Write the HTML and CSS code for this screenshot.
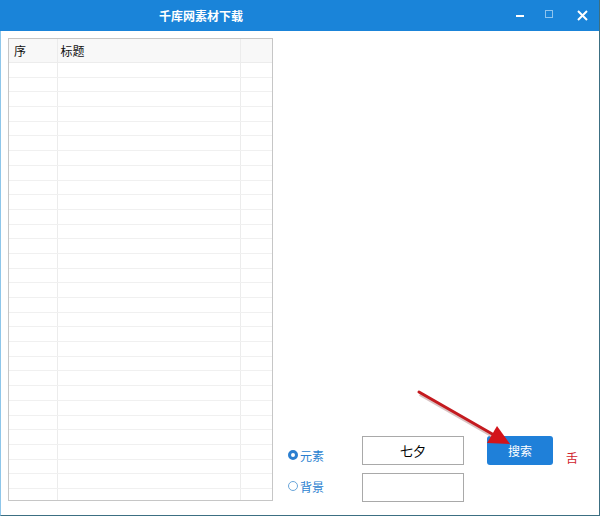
FILE: index.html
```html
<!DOCTYPE html>
<html lang="zh">
<head>
    <meta charset="UTF-8">
    <title>千库网素材下载</title>
    <link rel="stylesheet" href="styles.css">
</head>
<body>
    <div class="window">
        <div class="titlebar">
            <div class="title">千库网素材下载</div>
            <div class="controls">
                <span class="ctl ctl-min"></span>
                <span class="ctl ctl-max"></span>
                <svg class="ctl-close" width="11" height="11" viewBox="0 0 11 11">
                    <path d="M1 1 L10 10 M10 1 L1 10" stroke="#fff" stroke-width="2" />
                </svg>
            </div>
        </div>

        <div class="content">
            <div class="list">
                <table>
                    <colgroup>
                        <col class="c1">
                        <col class="c2">
                        <col class="c3">
                    </colgroup>
                    <thead>
                        <tr><th>序</th><th class="h2">标题</th><th></th></tr>
                    </thead>
                    <tbody>
                        <tr><td></td><td></td><td></td></tr>
                        <tr><td></td><td></td><td></td></tr>
                        <tr><td></td><td></td><td></td></tr>
                        <tr><td></td><td></td><td></td></tr>
                        <tr><td></td><td></td><td></td></tr>
                        <tr><td></td><td></td><td></td></tr>
                        <tr><td></td><td></td><td></td></tr>
                        <tr><td></td><td></td><td></td></tr>
                        <tr><td></td><td></td><td></td></tr>
                        <tr><td></td><td></td><td></td></tr>
                        <tr><td></td><td></td><td></td></tr>
                        <tr><td></td><td></td><td></td></tr>
                        <tr><td></td><td></td><td></td></tr>
                        <tr><td></td><td></td><td></td></tr>
                        <tr><td></td><td></td><td></td></tr>
                        <tr><td></td><td></td><td></td></tr>
                        <tr><td></td><td></td><td></td></tr>
                        <tr><td></td><td></td><td></td></tr>
                        <tr><td></td><td></td><td></td></tr>
                        <tr><td></td><td></td><td></td></tr>
                        <tr><td></td><td></td><td></td></tr>
                        <tr><td></td><td></td><td></td></tr>
                        <tr><td></td><td></td><td></td></tr>
                        <tr><td></td><td></td><td></td></tr>
                        <tr><td></td><td></td><td></td></tr>
                        <tr><td></td><td></td><td></td></tr>
                        <tr><td></td><td></td><td></td></tr>
                        <tr><td></td><td></td><td></td></tr>
                        <tr><td></td><td></td><td></td></tr>
                        <tr><td></td><td></td><td></td></tr>
                        <tr><td></td><td></td><td></td></tr>
                    </tbody>
                </table>
            </div>

            <div class="panel">
                <div class="radios">
                    <label class="radio"><span class="dot checked"></span>元素</label>
                    <label class="radio"><span class="dot"></span>背景</label>
                </div>
                <div class="inputs">
                    <div class="field">七夕</div>
                    <div class="field"></div>
                </div>
                <div class="actions">
                    <button class="btn-search">搜索</button>
                    <span class="mark">舌</span>
                </div>
            </div>
        </div>

        <!-- Pfeil -->
        <svg class="arrow" width="600" height="516" viewBox="0 0 600 516">
            <line x1="419" y1="392" x2="494" y2="435" stroke="#d9c2c2" stroke-width="4" transform="translate(1,2)" />
            <line x1="419" y1="392" x2="494" y2="435" stroke="#c41a1f" stroke-width="3" stroke-linecap="round" />
            <polygon points="510,444 487,443 497,426" fill="#d3141a" />
        </svg>
    </div>
</body>
</html>
```

FILE: styles.css
```css
body, html {
    margin: 0;
    padding: 0;
    font-family: "Noto Sans CJK SC", "Noto Sans", sans-serif;
    background-color: white;
    overflow: hidden;
}

.window {
    position: relative;
    width: 600px;
    height: 516px;
    box-sizing: border-box;
    border-left: 1px solid #8ec6ea;
    border-right: 1px solid #3c6f82;
    border-bottom: 1px solid #3c6f82;
    display: flex;
    flex-direction: column;
}

.titlebar {
    height: 31px;
    margin-left: -1px;
    background-color: #1a84d9;
    display: flex;
    align-items: center;
    color: white;
}

.title {
    margin-left: 159px;
    font-size: 12px;
    font-weight: bold;
    flex: 1;
}

.controls {
    display: flex;
    align-items: center;
    height: 100%;
}

.ctl {
    display: inline-block;
}

.ctl-min {
    width: 8px;
    height: 2px;
    background-color: white;
    margin-right: 21px;
    margin-top: 1px;
}

.ctl-max {
    width: 6px;
    height: 6px;
    border: 1px solid #8fc4ee;
    margin-right: 24px;
    margin-top: -3px;
}

.ctl-close {
    margin-right: 11px;
}

.content {
    flex: 1;
    display: flex;
}

.list {
    margin: 7px 0 0 7px;
    width: 265px;
    height: 463px;
    box-sizing: border-box;
    border: 1px solid #c6c6c6;
    overflow: hidden;
}

table {
    border-collapse: collapse;
    width: 263px;
    table-layout: fixed;
}

col.c1 { width: 48px; }
col.c2 { width: 183px; }
col.c3 { width: 32px; }

th {
    height: 23px;
    background-color: #f8f8f8;
    border-bottom: 1px solid #ececec;
    border-right: 1px solid #ececec;
    font-size: 12px;
    font-weight: normal;
    text-align: left;
    color: #111;
    padding: 0 0 0 5px;
}

th.h2 { padding-left: 3px; }

th:last-child {
    border-right: none;
}

td {
    height: 13.7px;
    padding: 0;
    border-bottom: 1px solid #f0f0f0;
    border-right: 1px solid #ececec;
}

td:last-child {
    border-right: none;
}

.panel {
    flex: 1;
    display: flex;
    align-items: flex-end;
    padding: 0 0 13px 15px;
}

.radios {
    display: flex;
    flex-direction: column;
    gap: 15px;
    width: 74px;
    margin-bottom: 8px;
}

.radio {
    display: flex;
    align-items: center;
    height: 16px;
    font-size: 12px;
    color: #2b7fd0;
}

.dot {
    width: 8px;
    height: 8px;
    border-radius: 50%;
    border: 1px solid #6aa6da;
    margin-right: 2px;
    box-sizing: content-box;
}

.dot.checked {
    width: 4px;
    height: 4px;
    border: 3px solid #2b7fd0;
    background-color: white;
}

.inputs {
    display: flex;
    flex-direction: column;
    gap: 8px;
}

.field {
    width: 102px;
    height: 29px;
    box-sizing: border-box;
    border: 1px solid #a9a9a9;
    display: flex;
    align-items: center;
    justify-content: center;
    font-size: 13px;
    color: #000;
}

.actions {
    height: 66px;
    display: flex;
    align-items: flex-start;
}

.btn-search {
    margin-left: 23px;
    width: 66px;
    height: 29px;
    border: none;
    border-radius: 3px;
    background-color: #1f80d9;
    color: white;
    font-family: inherit;
    font-size: 12px;
    padding: 0;
}

.mark {
    margin: 14px 0 0 13px;
    font-size: 12px;
    line-height: 16px;
    color: #d0222c;
}

.arrow {
    position: absolute;
    top: 0;
    left: -1px;
    pointer-events: none;
}
```
